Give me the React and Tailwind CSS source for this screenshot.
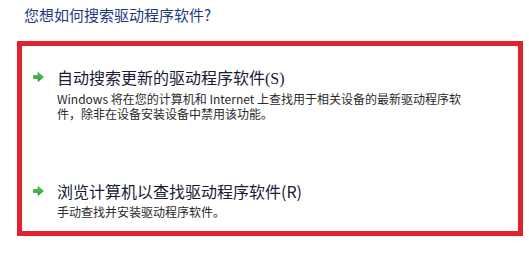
import React from "react";

const Arrow = () => (
  <svg width="11" height="10" viewBox="0 0 11 10" className="block">
    <defs>
      <linearGradient id="g" x1="0" y1="0" x2="0" y2="1">
        <stop offset="0" stopColor="#5fd65a" />
        <stop offset="1" stopColor="#1c9a2a" />
      </linearGradient>
    </defs>
    <path d="M0.5 3.5 H5 V0.5 L10.5 5 L5 9.5 V6.5 H0.5 Z" fill="url(#g)" stroke="#2a8f2f" strokeWidth="0.6" strokeLinejoin="round" />
  </svg>
);

const cjk = { fontFamily: '"Noto Sans CJK SC", "Noto Sans", sans-serif' };

export default function App() {
  return (
    <div className="w-[529px] h-[259px] bg-white overflow-hidden" style={cjk}>
      <div className="pl-[24px] pt-[5px] h-[41px] text-[15px] leading-[20px] text-[#1d3a7e]">
        您想如何搜索驱动程序软件?
      </div>
      <div className="ml-[17px] w-[506px] h-[195px] border-[5px] border-[#e0222e] pt-[21px]">
        <div className="flex">
          <div className="w-[35px] pl-[11px] pt-[5px]">
            <Arrow />
          </div>
          <div>
            <div className="text-[16px] leading-[20px] text-[#171b33]">
              自动搜索更新的驱动程序软件<span style={{ fontFamily: '"Liberation Serif", serif' }}>(S)</span>
            </div>
            <div className="mt-[2px] text-[12px] leading-[15px] text-[#2a2a2a]">
              <div className="h-[15px]">Windows 将在您的计算机和 Internet 上查找用于相关设备的最新驱动程序软</div>
              <div className="h-[15px]">件，除非在设备安装设备中禁用该功能。</div>
            </div>
          </div>
        </div>
        <div className="flex mt-[60px]">
          <div className="w-[35px] pl-[11px] pt-[5px]">
            <Arrow />
          </div>
          <div>
            <div className="text-[16px] leading-[20px] text-[#171b33]">
              浏览计算机以查找驱动程序软件(R)
            </div>
            <div className="mt-[3px] text-[12px] leading-[15px] text-[#2a2a2a]">
              手动查找并安装驱动程序软件。
            </div>
          </div>
        </div>
      </div>
    </div>
  );
}
